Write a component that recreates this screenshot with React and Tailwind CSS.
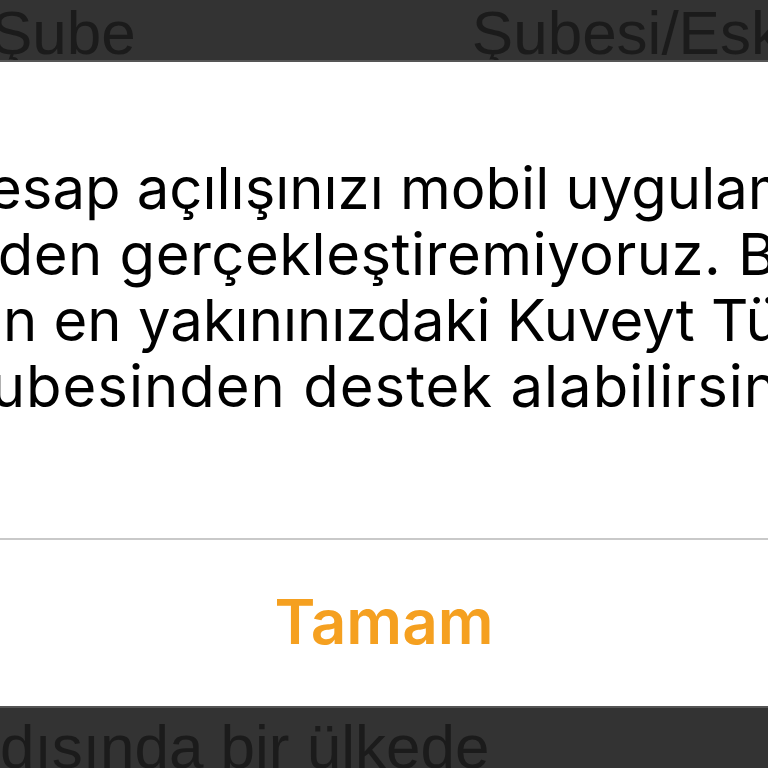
export default function App() {
    // each row of the alert message, as the phone wrapped it
    const lines = [
        { text: 'Hesap açılışınızı mobil uygulama', cls: 'translate-x-[4px]' },
        { text: 'üzerinden gerçekleştiremiyoruz. Bunun', cls: 'tracking-[0.5px] -translate-x-[14px]' },
        { text: 'için en yakınınızdaki Kuveyt Türk', cls: 'translate-x-[4px]' },
        { text: 'şubesinden destek alabilirsiniz.', cls: 'tracking-[1px] translate-x-[18px]' },
    ];

    return (
        <div className="flex h-[768px] w-[768px] flex-col overflow-hidden bg-white">
            {/* dimmed page behind the alert */}
            <div className="flex h-[62px] shrink-0 overflow-hidden border-b-2 border-[#555555] bg-[#333333] font-['Liberation_Sans',Arial,sans-serif] text-[62px] leading-none text-[#1b1b1b]">
                <span className="ml-[-9px] mt-[2px] whitespace-nowrap">Şube</span>
                <span className="ml-[336px] mt-[2px] whitespace-nowrap">Şubesi/Eskişehir</span>
            </div>

            {/* alert */}
            <div className="flex h-[644px] shrink-0 flex-col bg-white font-['Inter','Noto_Sans',sans-serif]">
                <div className="flex flex-1 flex-col items-center justify-start pt-[93px] text-[58px] leading-[66px] text-black">
                    {lines.map((line) => (
                        <p key={line.text} className={`whitespace-nowrap ${line.cls}`}>
                            {line.text}
                        </p>
                    ))}
                </div>
                <div className="h-[2px] shrink-0 bg-[#c9c9c9]" />
                <div className="flex h-[166px] shrink-0 items-center justify-center pb-[4px] text-[62px] font-semibold text-[#f5a020]">
                    Tamam
                </div>
            </div>

            <div className="flex h-[62px] shrink-0 overflow-hidden border-t-2 border-[#555555] bg-[#333333] font-['Liberation_Sans',Arial,sans-serif] text-[62px] leading-none text-[#1b1b1b]">
                <span className="ml-[0px] mt-[8px] whitespace-nowrap">dışında bir ülkede</span>
            </div>
        </div>
    );
}
